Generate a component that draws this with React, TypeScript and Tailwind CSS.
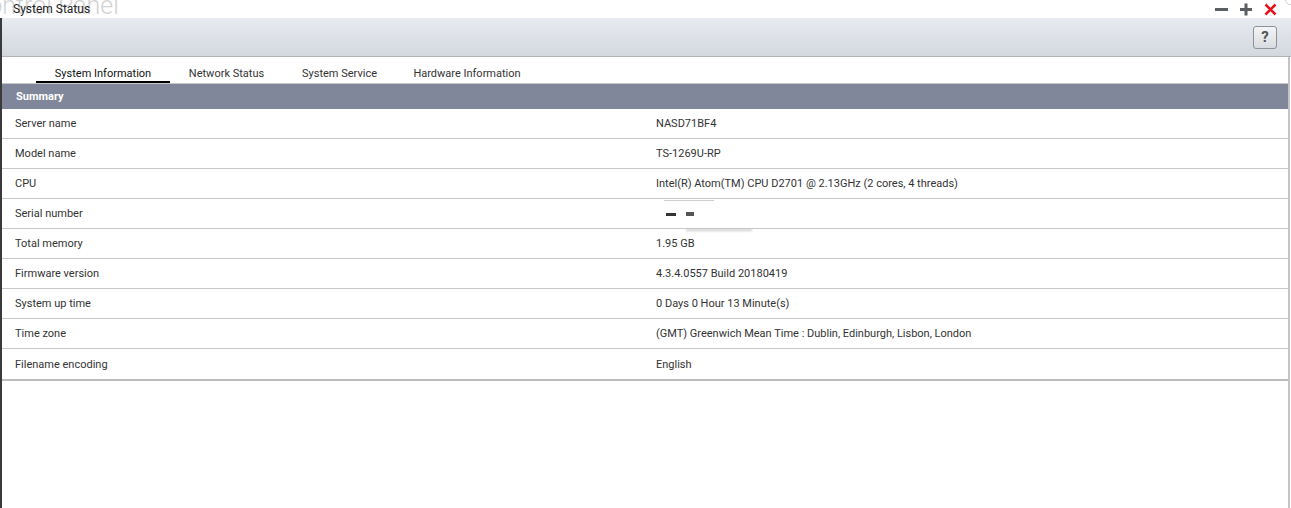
import React from "react";

const rows: { label: string; value: string }[] = [
  { label: "Server name", value: "NASD71BF4" },
  { label: "Model name", value: "TS-1269U-RP" },
  { label: "CPU", value: "Intel(R) Atom(TM) CPU D2701 @ 2.13GHz (2 cores, 4 threads)" },
  { label: "Serial number", value: "" },
  { label: "Total memory", value: "1.95 GB" },
  { label: "Firmware version", value: "4.3.4.0557 Build 20180419" },
  { label: "System up time", value: "0 Days 0 Hour 13 Minute(s)" },
  { label: "Time zone", value: "(GMT) Greenwich Mean Time : Dublin, Edinburgh, Lisbon, London" },
  { label: "Filename encoding", value: "English" },
];

const tabs = [
  { name: "System Information", w: "w-[134px]" },
  { name: "Network Status", w: "w-[113px]" },
  { name: "System Service", w: "w-[113px]" },
  { name: "Hardware Information", w: "w-[142px]" },
];

function WindowControls() {
  return (
    <div className="relative flex items-center h-full gap-[12px] pr-[14px]">
      <svg width="13" height="13" viewBox="0 0 13 13">
        <rect x="0" y="5" width="13" height="3" fill="#5a5f66" />
      </svg>
      <svg width="12" height="13" viewBox="0 0 12 13">
        <rect x="0" y="5" width="12" height="3" fill="#5a5f66" />
        <rect x="4.5" y="0.5" width="3" height="12" fill="#5a5f66" />
      </svg>
      <svg width="13" height="13" viewBox="0 0 13 13">
        <path d="M1.5 1.5 L11.5 11.5 M11.5 1.5 L1.5 11.5" stroke="#e8141c" strokeWidth="2.6" />
      </svg>
    </div>
  );
}

// serial number is smudged out
function SerialMask() {
  return (
    <div className="relative w-[110px] h-[30px]">
      <div className="absolute left-[8px] top-[0px] w-[50px] h-[1px] bg-[#cfcfcf] blur-[0.6px]" />
      <div className="absolute left-[10px] top-[13px] w-[10px] h-[3px] bg-[#333] blur-[0.5px]" />
      <div className="absolute left-[30px] top-[12px] w-[8px] h-[4px] bg-[#555] blur-[0.6px]" />
      <div className="absolute left-[30px] top-[29px] w-[66px] h-[2px] bg-[#c8c8c8] blur-[0.8px]" />
    </div>
  );
}

export default function App() {
  return (
    <div className="relative w-[1291px] h-[508px] overflow-hidden bg-white font-['Roboto',sans-serif] text-[#333]">
      {/* title bar, with the desktop's window title showing through behind */}
      <div className="relative h-[18px] flex items-center justify-between bg-white">
        <span className="absolute left-[-28px] top-[-7px] text-[25px] font-light leading-none text-[#d2d2d2] whitespace-nowrap">
          Control Panel
        </span>
        <span className="relative pl-[13px] text-[12px] text-[#222] leading-none">System Status</span>
        <WindowControls />
        <div className="absolute right-[-4px] top-[-5px] w-[10px] h-[10px] rounded-full border border-[#d0d0d0]" />
      </div>

      <div className="flex flex-col h-[490px] border-l-2 border-[#3a3a3c]">
        {/* toolbar */}
        <div className="h-[39px] flex items-center justify-end pr-[14px] bg-gradient-to-b from-[#e8ebf0] to-[#d3d8df] border-b border-[#aeb3ba]">
          <button className="w-[24px] h-[23px] mt-[1px] rounded-[3px] border border-[#8d9299] bg-gradient-to-b from-[#f4f5f7] to-[#d8dbe0] text-[15px] font-bold text-[#555] leading-none flex items-center justify-center">
            ?
          </button>
        </div>

        <div className="flex-1 flex flex-col border-r-2 border-[#c4c4c4] mr-[1px]">
          {/* tabs */}
          <div className="h-[27px] flex items-end pl-[34px] border-b border-[#c6c6c6]">
            {tabs.map((t, i) => (
              <div
                key={t.name}
                className={`${t.w} h-[24px] pt-[8px] flex items-center justify-center text-[11px] whitespace-nowrap ${
                  i === 0 ? "border-b-2 border-black text-[#111]" : "border-b-2 border-transparent text-[#333]"
                }`}
              >
                {t.name}
              </div>
            ))}
          </div>

          {/* summary */}
          <div className="h-[25px] pt-[1px] flex items-center pl-[14px] bg-[#80879a] text-white text-[11px] font-bold">
            Summary
          </div>

          <div className="flex flex-col border-b-2 border-[#bdbdbd]">
            {rows.map((r, i) => (
              <div
                key={r.label}
                className={`h-[30px] pt-[2px] flex items-center text-[11px] ${i < rows.length - 1 ? "border-b border-[#c8c8c8]" : ""}`}
              >
                <span className="w-[654px] pl-[13px]">{r.label}</span>
                {r.value ? <span>{r.value}</span> : <SerialMask />}
              </div>
            ))}
          </div>
          <div className="flex-1" />
        </div>
      </div>
    </div>
  );
}
